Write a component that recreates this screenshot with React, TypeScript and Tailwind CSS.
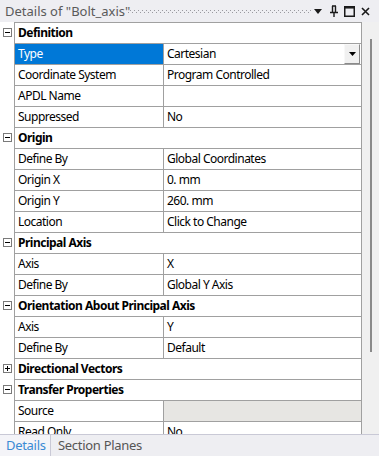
import React from 'react';

type Row =
  | { kind: 'group'; label: string; open: boolean }
  | { kind: 'prop'; label: string; value: string; selected?: boolean; dropdown?: boolean; disabled?: boolean };

const rows: Row[] = [
  { kind: 'group', label: 'Definition', open: true },
  { kind: 'prop', label: 'Type', value: 'Cartesian', selected: true, dropdown: true },
  { kind: 'prop', label: 'Coordinate System', value: 'Program Controlled' },
  { kind: 'prop', label: 'APDL Name', value: '' },
  { kind: 'prop', label: 'Suppressed', value: 'No' },
  { kind: 'group', label: 'Origin', open: true },
  { kind: 'prop', label: 'Define By', value: 'Global Coordinates' },
  { kind: 'prop', label: 'Origin X', value: '0. mm' },
  { kind: 'prop', label: 'Origin Y', value: '260. mm' },
  { kind: 'prop', label: 'Location', value: 'Click to Change' },
  { kind: 'group', label: 'Principal Axis', open: true },
  { kind: 'prop', label: 'Axis', value: 'X' },
  { kind: 'prop', label: 'Define By', value: 'Global Y Axis' },
  { kind: 'group', label: 'Orientation About Principal Axis', open: true },
  { kind: 'prop', label: 'Axis', value: 'Y' },
  { kind: 'prop', label: 'Define By', value: 'Default' },
  { kind: 'group', label: 'Directional Vectors', open: false },
  { kind: 'group', label: 'Transfer Properties', open: true },
  { kind: 'prop', label: 'Source', value: '', disabled: true },
  { kind: 'prop', label: 'Read Only', value: 'No' },
];

const Expander = ({ open }: { open: boolean }) => (
  <svg width="9" height="9" viewBox="0 0 9 9" className="block">
    <rect x="0.5" y="0.5" width="8" height="8" fill="#fff" stroke="#7a7a7a" />
    <line x1="2" y1="4.5" x2="7" y2="4.5" stroke="#000" />
    {!open && <line x1="4.5" y1="2" x2="4.5" y2="7" stroke="#000" />}
  </svg>
);

const Gripper = () => (
  <svg width="184" height="6" className="block shrink-0">
    <defs>
      <pattern id="grip" width="4" height="4" patternUnits="userSpaceOnUse">
        <rect x="0" y="0" width="1" height="1" fill="#9a9aa0" />
        <rect x="2" y="2" width="1" height="1" fill="#9a9aa0" />
      </pattern>
    </defs>
    <rect x="0" y="1" width="184" height="4" fill="url(#grip)" />
  </svg>
);

export default function App() {
  return (
    <div
      className="w-[379px] h-[456px] flex flex-col bg-[#f0f0f0] overflow-hidden text-[12px] tracking-[-0.5px] text-black"
      style={{ fontFamily: '"Noto Sans", "Noto Sans CJK SC", sans-serif' }}
    >
      {/* title bar */}
      <div className="h-[22px] flex items-center bg-[#eeeef2] pl-[5px] shrink-0">
        <span className="w-[123px] shrink-0 text-[13px] tracking-normal text-[#5a5a5a] whitespace-nowrap leading-none">
          Details of "Bolt_axis"
        </span>
        <Gripper />
        <div className="w-[67px] shrink-0 flex items-center pl-[2px]">
          <svg width="8" height="5" viewBox="0 0 8 5" className="shrink-0"><path d="M0 0h8L4 5z" fill="#1a1a1a" /></svg>
          <svg width="10" height="12" viewBox="0 0 10 12" className="ml-[7px] shrink-0">
            <path d="M3 1h4M3.5 1v6M6.5 1v6M1 7.5h8M5 8v4" stroke="#1a1a1a" strokeWidth="1.4" fill="none" />
          </svg>
          <svg width="11" height="11" viewBox="0 0 11 11" className="ml-[5px] shrink-0">
            <rect x="0.75" y="0.75" width="9.5" height="9.5" fill="none" stroke="#1a1a1a" strokeWidth="1.5" />
            <line x1="0" y1="1.8" x2="11" y2="1.8" stroke="#1a1a1a" strokeWidth="1.5" />
          </svg>
          <svg width="9" height="9" viewBox="0 0 9 9" className="ml-[6px] shrink-0">
            <path d="M1 1l7 7M8 1l-7 7" stroke="#1a1a1a" strokeWidth="1.6" />
          </svg>
        </div>
      </div>

      {/* grid + scrollbar */}
      <div className="flex-1 flex min-h-0">
        <div className="w-[362px] bg-white overflow-hidden">
          <div className="ml-[14px] w-[348px] border-t border-r border-[#a0a0a0]">
            {rows.map((r, i) =>
              r.kind === 'group' ? (
                <div key={i} className="relative h-[21px] flex items-center border-b border-l border-[#a0a0a0]">
                  <div className="absolute left-[-12px] top-[5px]">
                    <Expander open={r.open} />
                  </div>
                  <span className="pl-[3px] font-bold whitespace-nowrap">{r.label}</span>
                </div>
              ) : (
                <div key={i} className="h-[21px] flex border-b border-l border-[#a0a0a0]">
                  <div
                    className={
                      'w-[149px] flex items-center pl-[3px] border-r border-[#a0a0a0] whitespace-nowrap ' +
                      (r.selected ? 'bg-[#0078d7] text-white' : '')
                    }
                  >
                    {r.label}
                  </div>
                  <div
                    className={
                      'flex-1 flex items-center pl-[3px] whitespace-nowrap ' + (r.disabled ? 'bg-[#e7e6e3]' : '')
                    }
                  >
                    <span className="flex-1">{r.value}</span>
                    {r.dropdown && (
                      <div className="w-[16px] h-[20px] mr-[1px] flex items-center justify-center bg-[#f0f0f0] border-r border-b border-[#8a8a8a] border-l border-t border-l-[#f8f8f8] border-t-[#f8f8f8]">
                        <svg width="7" height="4" viewBox="0 0 7 4"><path d="M0 0h7L3.5 4z" fill="#000" /></svg>
                      </div>
                    )}
                  </div>
                </div>
              )
            )}
          </div>
        </div>
        <div className="w-[17px] bg-[#f0f0f0] relative">
          <div className="absolute left-[8px] top-[17px] w-[2px] h-[313px] bg-[#8a8a8a]" />
        </div>
      </div>

      {/* tabs */}
      <div className="h-[22px] shrink-0 flex bg-[#eeeef2] border-t border-[#c9c9d6]">
        <div className="w-[51px] flex items-center pl-[6px] bg-[#f4f4f8] border-r border-[#c9c9d6] text-[13px] tracking-[-0.3px] text-[#3a8ad4]">
          Details
        </div>
        <div className="flex items-center pl-[7px] text-[13px] tracking-[-0.3px] text-[#555]">Section Planes</div>
      </div>
    </div>
  );
}
